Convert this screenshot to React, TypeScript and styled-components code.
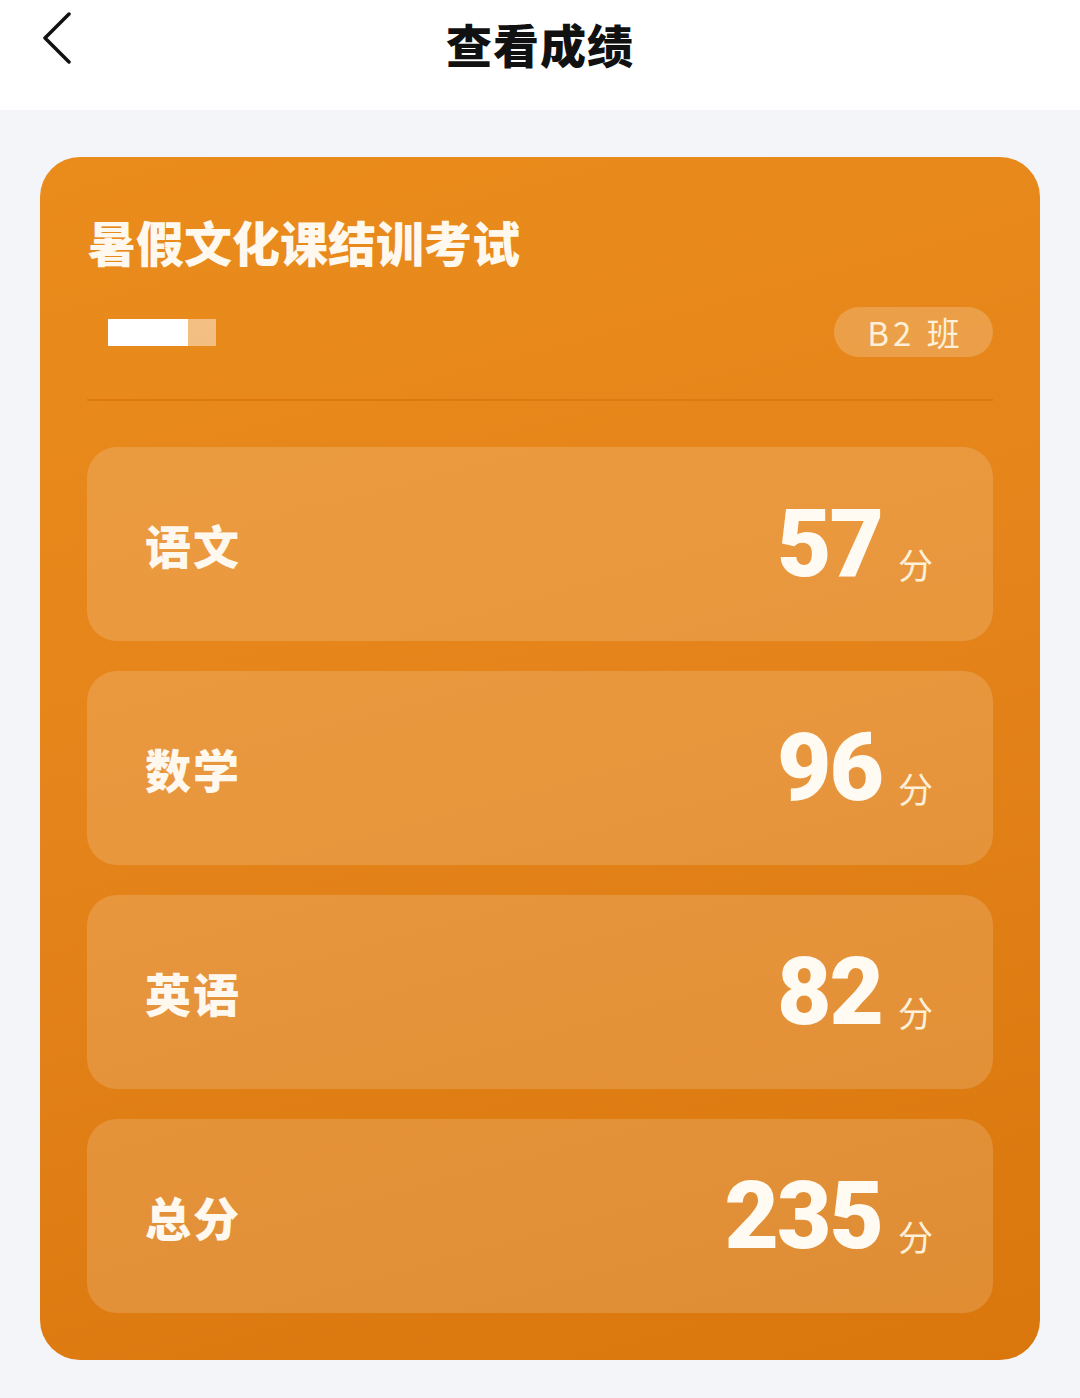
import React from "react";
import styled, { createGlobalStyle } from "styled-components";

const Global = createGlobalStyle`
  html, body { margin: 0; padding: 0; background: #f3f5f8; }
  body { font-family: "Noto Sans CJK SC", "Noto Sans", sans-serif; }
  * { box-sizing: border-box; }
`;

const Page = styled.div`
  width: 1080px;
  min-height: 1398px;
  background: #f3f5f8;
`;

const Header = styled.header`
  height: 110px;
  background: #ffffff;
  display: flex;
  align-items: flex-start;
  justify-content: center;
  position: relative;
`;

const BackButton = styled.button`
  position: absolute;
  left: 34px;
  top: 8px;
  width: 46px;
  height: 60px;
  border: none;
  background: none;
  padding: 0;
  display: flex;
  align-items: center;
  justify-content: center;
`;

const HeaderTitle = styled.h1`
  margin: 12px 0 0;
  font-size: 46px;
  font-weight: 900;
  color: #111;
  letter-spacing: 1px;
  line-height: 62px;
`;

const Content = styled.main`
  padding: 47px 40px 0;
`;

const Card = styled.section`
  border-radius: 40px;
  background: linear-gradient(165deg, #ea8c1c 0%, #e5841a 45%, #d9770d 100%);
  padding: 50px 47px 47px;
  display: flex;
  flex-direction: column;
`;

const Title = styled.h2`
  margin: 0;
  padding-left: 1px;
  font-size: 48px;
  font-weight: 900;
  color: #fff8ee;
  line-height: 68px;
`;

const MetaRow = styled.div`
  display: flex;
  align-items: center;
  justify-content: space-between;
  margin-top: 32px;
  padding-bottom: 42px;
  border-bottom: 2px solid rgba(214, 110, 10, 0.55);
`;

const Redacted = styled.div`
  margin-left: 21px;
  width: 108px;
  height: 27px;
  background: linear-gradient(90deg, #ffffff 0 80px, rgba(255, 255, 255, 0.45) 80px 108px);
`;

const ClassPill = styled.div`
  width: 159px;
  height: 50px;
  border-radius: 25px;
  background: rgba(255, 255, 255, 0.2);
  color: #fdf0d8;
  font-size: 33px;
  display: flex;
  align-items: center;
  justify-content: center;
  letter-spacing: 4px;
  padding-left: 4px;
`;

const Rows = styled.div`
  margin-top: 46px;
  display: flex;
  flex-direction: column;
  gap: 30px;
`;

const Row = styled.div`
  height: 194px;
  border-radius: 30px;
  background: rgba(255, 255, 255, 0.16);
  display: flex;
  align-items: center;
  justify-content: space-between;
  padding: 0 60px 0 58px;
`;

const Subject = styled.span`
  font-size: 46px;
  font-weight: 900;
  color: #fff8ee;
  letter-spacing: 2px;
`;

const ScoreWrap = styled.div`
  display: flex;
  align-items: baseline;
  gap: 16px;
  color: #fffaf2;
`;

const Score = styled.span`
  font-family: "Roboto", "Liberation Sans", sans-serif;
  font-size: 94px;
  font-weight: 900;
  line-height: 1;
  letter-spacing: -2px;
`;

const Unit = styled.span`
  font-size: 35px;
  font-weight: 400;
  color: #fdf0d8;
  transform: translateY(3px);
`;

const scores = [
  { subject: "语文", score: 57 },
  { subject: "数学", score: 96 },
  { subject: "英语", score: 82 },
  { subject: "总分", score: 235 },
];

export default function App() {
  return (
    <Page>
      <Global />
      <Header>
        <BackButton aria-label="返回">
          <svg width="32" height="52" viewBox="0 0 32 52" fill="none">
            <path d="M28 2 L4 26 L28 50" stroke="#111" strokeWidth="3.5" strokeLinecap="round" strokeLinejoin="round" />
          </svg>
        </BackButton>
        <HeaderTitle>查看成绩</HeaderTitle>
      </Header>
      <Content>
        <Card>
          <Title>暑假文化课结训考试</Title>
          <MetaRow>
            <Redacted />
            <ClassPill>B2 班</ClassPill>
          </MetaRow>
          <Rows>
            {scores.map((s) => (
              <Row key={s.subject}>
                <Subject>{s.subject}</Subject>
                <ScoreWrap>
                  <Score>{s.score}</Score>
                  <Unit>分</Unit>
                </ScoreWrap>
              </Row>
            ))}
          </Rows>
        </Card>
      </Content>
    </Page>
  );
}
